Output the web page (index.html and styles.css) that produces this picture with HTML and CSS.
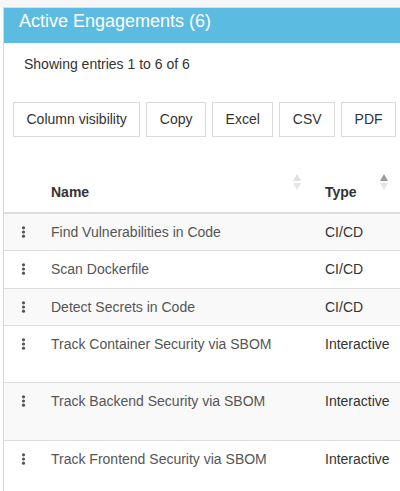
FILE: index.html
```html
<!DOCTYPE html>
<html>
<head>
<meta charset="utf-8">
<link rel="stylesheet" href="styles.css">
</head>
<body>
<div class="topstrip"></div>
<div class="panel">
  <div class="panel-heading">Active Engagements (6)</div>
  <div class="info">Showing entries 1 to 6 of 6</div>
  <div class="buttons">
    <button class="btn">Column visibility</button>
    <button class="btn">Copy</button>
    <button class="btn">Excel</button>
    <button class="btn">CSV</button>
    <button class="btn">PDF</button>
  </div>
  <table class="grid">
    <colgroup><col class="c-menu"><col class="c-name"><col></colgroup>
    <thead>
      <tr>
        <th></th>
        <th class="sortable sort-name">Name<span class="arrows"><span class="up"></span><span class="down"></span></span></th>
        <th class="sortable sort-type">Type<span class="arrows"><span class="up active"></span><span class="down"></span></span></th>
      </tr>
    </thead>
    <tbody>
      <tr class="odd">
        <td class="menu"><svg class="kebab" width="5" height="12" viewBox="0 0 5 12"><circle cx="2.5" cy="1.8" r="1.6"/><circle cx="2.5" cy="6" r="1.6"/><circle cx="2.5" cy="10.2" r="1.6"/></svg></td>
        <td class="name">Find Vulnerabilities in Code</td>
        <td class="type">CI/CD</td>
      </tr>
      <tr>
        <td class="menu"><svg class="kebab" width="5" height="12" viewBox="0 0 5 12"><circle cx="2.5" cy="1.8" r="1.6"/><circle cx="2.5" cy="6" r="1.6"/><circle cx="2.5" cy="10.2" r="1.6"/></svg></td>
        <td class="name">Scan Dockerfile</td>
        <td class="type">CI/CD</td>
      </tr>
      <tr class="odd">
        <td class="menu"><svg class="kebab" width="5" height="12" viewBox="0 0 5 12"><circle cx="2.5" cy="1.8" r="1.6"/><circle cx="2.5" cy="6" r="1.6"/><circle cx="2.5" cy="10.2" r="1.6"/></svg></td>
        <td class="name">Detect Secrets in Code</td>
        <td class="type">CI/CD</td>
      </tr>
      <tr class="tall">
        <td class="menu"><svg class="kebab" width="5" height="12" viewBox="0 0 5 12"><circle cx="2.5" cy="1.8" r="1.6"/><circle cx="2.5" cy="6" r="1.6"/><circle cx="2.5" cy="10.2" r="1.6"/></svg></td>
        <td class="name">Track Container Security via SBOM</td>
        <td class="type">Interactive</td>
      </tr>
      <tr class="odd tall">
        <td class="menu"><svg class="kebab" width="5" height="12" viewBox="0 0 5 12"><circle cx="2.5" cy="1.8" r="1.6"/><circle cx="2.5" cy="6" r="1.6"/><circle cx="2.5" cy="10.2" r="1.6"/></svg></td>
        <td class="name">Track Backend Security via SBOM</td>
        <td class="type">Interactive</td>
      </tr>
      <tr class="tall">
        <td class="menu"><svg class="kebab" width="5" height="12" viewBox="0 0 5 12"><circle cx="2.5" cy="1.8" r="1.6"/><circle cx="2.5" cy="6" r="1.6"/><circle cx="2.5" cy="10.2" r="1.6"/></svg></td>
        <td class="name">Track Frontend Security via SBOM</td>
        <td class="type">Interactive</td>
      </tr>
    </tbody>
  </table>
</div>
</body>
</html>
```

FILE: styles.css
```css
html, body {
  margin: 0;
  padding: 0;
  overflow: hidden;
  background: #ffffff;
}
body {
  font-family: "Liberation Sans", Arial, sans-serif;
  font-size: 14px;
  line-height: 20px;
  color: #333333;
}
.topstrip {
  height: 7px;
  background: #f6f6f6;
}
.panel {
  margin: 0 -20px 0 3px;
  border-top: 1px solid #dddddd;
  border-left: 1px solid #d6d6d6;
  background: #ffffff;
}
.panel-heading {
  height: 35px;
  box-sizing: border-box;
  padding: 3px 15px 0;
  background: #5bbbe1;
  color: #ffffff;
  font-size: 18px;
  line-height: 20px;
}
.info {
  margin-top: 11px;
  padding-left: 20px;
  color: #333333;
}
.buttons {
  display: flex;
  gap: 6px;
  margin: 28px 0 0 9px;
}
.btn {
  font-family: "Liberation Sans", Arial, sans-serif;
  font-size: 14px;
  line-height: 20px;
  color: #333333;
  background: #ffffff;
  border: 1px solid #dadada;
  border-radius: 0;
  padding: 6px 12.5px 7px;
  margin: 0;
}
.grid {
  margin-top: 37px;
  width: 100%;
  table-layout: fixed;
  border-collapse: separate;
  border-spacing: 0;
}
.c-menu { width: 39px; }
.c-name { width: 274px; }
.grid th {
  position: relative;
  text-align: left;
  font-weight: bold;
  color: #333333;
  padding: 8px 8px 10px;
  border-bottom: 2px solid #dddddd;
}
.arrows {
  position: absolute;
  top: 0;
  display: flex;
  flex-direction: column;
  gap: 2px;
}
.sort-name .arrows { right: 16px; }
.sort-type .arrows { right: 32px; }
.arrows .up {
  width: 0;
  height: 0;
  border-left: 4px solid transparent;
  border-right: 4px solid transparent;
  border-bottom: 7px solid #e0e0e0;
}
.arrows .down {
  width: 0;
  height: 0;
  border-left: 4px solid transparent;
  border-right: 4px solid transparent;
  border-top: 7px solid #e6e6e6;
}
.arrows .up.active {
  border-bottom-color: #9a9a9a;
}
.grid td {
  padding: 8px 8px 8.3px;
  vertical-align: top;
  border-top: 1px solid #dddddd;
}
.grid tbody tr:first-child td {
  border-top: none;
}
.grid tr.odd td {
  background: #f9f9f9;
}
.grid tr.tall td {
  padding-bottom: 28.4px;
}
.grid td.menu {
  text-align: center;
}
.kebab {
  display: block;
  margin: 4px auto 0;
  fill: #555555;
}
.grid td.name {
  color: #555555;
}
.grid td.type {
  color: #333333;
}
```
